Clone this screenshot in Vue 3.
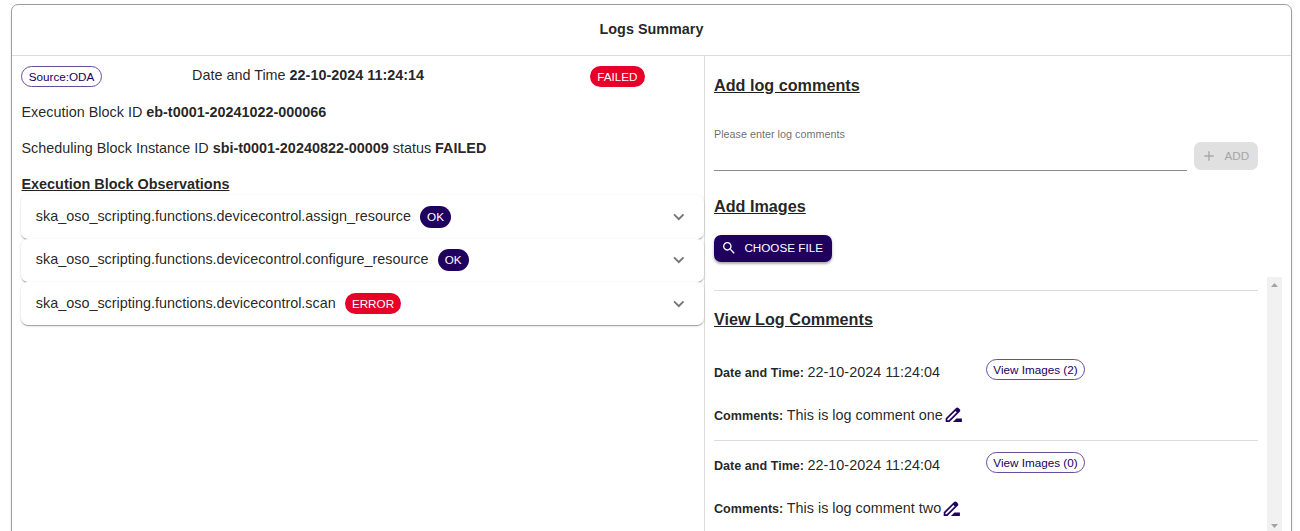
<script setup>
const observations = [
  { name: 'ska_oso_scripting.functions.devicecontrol.assign_resource', status: 'OK' },
  { name: 'ska_oso_scripting.functions.devicecontrol.configure_resource', status: 'OK' },
  { name: 'ska_oso_scripting.functions.devicecontrol.scan', status: 'ERROR' },
]

const comments = [
  { id: 1, date: '22-10-2024 11:24:04', text: 'This is log comment one', images: 2 },
  { id: 2, date: '22-10-2024 11:24:04', text: 'This is log comment two', images: 0 },
]
</script>

<template>
  <div class="page">
    <section class="card">
      <header class="card-header">Logs Summary</header>
      <div class="card-body">
        <div class="summary">
          <div class="top-row">
            <span class="chip outlined">Source:ODA</span>
            <span class="stamp">Date and Time <b>22-10-2024 11:24:14</b></span>
            <span class="chip error">FAILED</span>
          </div>
          <p class="line">Execution Block ID <b>eb-t0001-20241022-000066</b></p>
          <p class="line">Scheduling Block Instance ID <b>sbi-t0001-20240822-00009</b> status <b>FAILED</b></p>
          <h3 class="line heading">Execution Block Observations</h3>
          <div class="accordions">
            <div v-for="o in observations" :key="o.name" class="accordion">
              <span>{{ o.name }}</span>
              <span class="chip" :class="o.status === 'OK' ? 'ok' : 'error'">{{ o.status }}</span>
              <svg class="chevron" viewBox="0 0 24 24"><path d="M16.59 8.59 12 13.17 7.41 8.59 6 10l6 6 6-6z" /></svg>
            </div>
          </div>
        </div>

        <div class="comments-panel">
          <h2 class="title">Add log comments</h2>
          <div class="entry">
            <label class="field">
              <span class="field-label">Please enter log comments</span>
            </label>
            <button class="btn disabled" disabled>
              <svg class="btn-icon" viewBox="0 0 24 24"><path d="M19 13h-6v6h-2v-6H5v-2h6V5h2v6h6v2z" /></svg>
              ADD
            </button>
          </div>
          <h2 class="title images-title">Add Images</h2>
          <button class="btn primary">
            <svg class="btn-icon" viewBox="0 0 24 24"><path d="M15.5 14h-.79l-.28-.27C15.41 12.59 16 11.11 16 9.5 16 5.91 13.09 3 9.5 3S3 5.91 3 9.5 5.91 16 9.5 16c1.61 0 3.09-.59 4.23-1.57l.27.28v.79l5 4.99L20.49 19l-4.99-5zm-6 0C7.01 14 5 11.99 5 9.5S7.01 5 9.5 5 14 7.01 14 9.5 11.99 14 9.5 14z" /></svg>
            CHOOSE FILE
          </button>

          <div class="scroll">
            <div class="scroll-content">
              <h2 class="title view-title">View Log Comments</h2>
              <article v-for="c in comments" :key="c.id" class="comment">
                <div class="comment-row">
                  <span class="comment-date"><b class="small">Date and Time: </b>{{ c.date }}</span>
                  <span class="chip outlined">View Images ({{ c.images }})</span>
                </div>
                <div class="comment-row">
                  <span><b class="small">Comments: </b>{{ c.text }}</span>
                  <svg class="edit" viewBox="0 0 24 24"><path fill-rule="evenodd" d="m15 16-4 4h10v-4zM3 20v-4.2L14.5 4.4c.8-.8 2-.8 2.8 0l1.3 1.3c.8.8.8 2 0 2.8L7.2 20zM4.9 18.1h1.5l8.9-8.9-1.5-1.5-8.9 8.9z" /></svg>
                </div>
              </article>
            </div>
            <div class="scrollbar">
              <svg viewBox="0 0 15 15"><path d="M4 10h7L7.5 6z" /></svg>
              <svg viewBox="0 0 15 15"><path d="M4 6h7L7.5 10z" /></svg>
            </div>
          </div>
        </div>
      </div>
    </section>
  </div>
</template>

<style>
body {
  margin: 0;
  background: #fff;
}
</style>

<style scoped>
.page {
  box-sizing: border-box;
  height: 531px;
  padding: 4px 8px 0 11px;
  overflow: hidden;
  font-family: "Liberation Sans", Arial, sans-serif;
  font-size: 14.4px;
  line-height: 21.6px;
  color: rgba(0, 0, 0, 0.87);
}
.card {
  box-sizing: border-box;
  height: 560px;
  border: 1px solid #9e9e9e;
  border-radius: 7px;
  box-shadow: 0 1px 2px rgba(0, 0, 0, 0.16);
}
.card-header {
  box-sizing: border-box;
  height: 51px;
  padding-top: 13.5px;
  border-bottom: 1px solid #dcdcdc;
  text-align: center;
  font-weight: 700;
}
.card-body {
  display: grid;
  grid-template-columns: 693px 1fr;
  height: 500px;
}
.summary {
  box-sizing: border-box;
  padding: 9px 0 0 9px;
  border-right: 1px solid #dcdcdc;
}
.top-row {
  display: grid;
  grid-template-columns: 171px 398px auto;
  justify-content: start;
  justify-items: start;
  height: 36.6px;
}
.top-row .chip {
  height: 21px;
  margin-top: 1px;
}
.line {
  margin: 0 0 14.4px;
  padding-left: 0.5px;
  font-size: 14.4px;
}
.heading {
  margin: 0;
  font-weight: 700;
  text-decoration: underline;
}
.chip {
  display: inline-flex;
  box-sizing: border-box;
  align-items: center;
  height: 21.6px;
  padding: 0 7.2px;
  border-radius: 14px;
  font-size: 11.7px;
  white-space: nowrap;
}
.outlined {
  height: 21px;
  padding: 0 6.7px;
  border: 1px solid #6a4b9e;
  color: #21005f;
}
.error {
  background: #e70027;
  color: #fff;
}
.ok {
  background: #20005f;
  color: #fff;
}
.accordions {
  width: 683px;
  margin-top: 0.3px;
}
.accordion {
  display: flex;
  box-sizing: border-box;
  align-items: center;
  height: 43.2px;
  padding: 0 14.4px 0 14.8px;
  border-radius: 7px;
  background: #fff;
  box-shadow: 0 2px 1px -1px rgba(0, 0, 0, 0.2), 0 1px 1px rgba(0, 0, 0, 0.14), 0 1px 3px rgba(0, 0, 0, 0.12);
}
.accordion .chip {
  margin-left: 9.1px;
  padding: 0 7px;
}
.chevron {
  width: 21.6px;
  height: 21.6px;
  margin-left: auto;
  fill: rgba(0, 0, 0, 0.54);
}
.comments-panel {
  display: flex;
  flex-direction: column;
  align-items: flex-start;
  padding: 18px 9px 0;
}
.title {
  margin: 0;
  font-size: 16.2px;
  line-height: 22px;
  font-weight: 700;
  text-decoration: underline;
}
.entry {
  display: flex;
  align-items: flex-end;
  gap: 7px;
  height: 75px;
}
.field {
  box-sizing: border-box;
  width: 473px;
  height: 45px;
  border-bottom: 1px solid #8c8c8c;
}
.field-label {
  display: block;
  font-size: 10.8px;
  line-height: 16px;
  color: rgba(0, 0, 0, 0.6);
}
.btn {
  display: flex;
  box-sizing: border-box;
  align-items: center;
  height: 27px;
  padding: 0 9px 1px 7px;
  border: 0;
  border-radius: 7px;
  font-family: inherit;
  font-size: 11.7px;
}
.btn-icon {
  width: 16px;
  height: 16px;
  margin-right: 7.4px;
  fill: currentColor;
}
.disabled {
  height: 28px;
  margin-bottom: 1px;
  background: #e0e0e0;
  color: #a6a6a6;
}
.primary {
  padding-bottom: 2px;
  background: #20005f;
  color: #fff;
  box-shadow: 0 2px 2px rgba(0, 0, 0, 0.24), 0 1px 4px rgba(0, 0, 0, 0.14);
}
.images-title {
  margin: 24px 0 18px;
}
.scroll {
  display: flex;
  width: 568px;
  height: 256px;
  margin-top: 15px;
}
.scroll-content {
  flex: 1;
  margin: 13px 9px 0 0;
  overflow: hidden;
  border-top: 1px solid #dcdcdc;
}
.view-title {
  margin: 17px 0 28px;
}
.comment {
  box-sizing: border-box;
  height: 83px;
  margin-bottom: 10.4px;
}
.comment:first-of-type {
  border-bottom: 1px solid #dcdcdc;
}
.comment-row {
  display: flex;
  align-items: flex-start;
  height: 43px;
}
.comment-row > span:first-child {
  padding-top: 4px;
  white-space: pre;
}
.comment-row .chip {
  margin-top: 1px;
  padding: 0 6.3px;
}
.comment-date {
  width: 272px;
}
.small {
  font-size: 12.6px;
}
.edit {
  width: 21.6px;
  height: 21.6px;
  margin-top: 3.3px;
  fill: #20005f;
}
.scrollbar {
  display: flex;
  flex-direction: column;
  justify-content: space-between;
  width: 15px;
  background: #f1f1f1;
}
.scrollbar svg {
  width: 15px;
  height: 15px;
  fill: #a3a3a3;
}
</style>
